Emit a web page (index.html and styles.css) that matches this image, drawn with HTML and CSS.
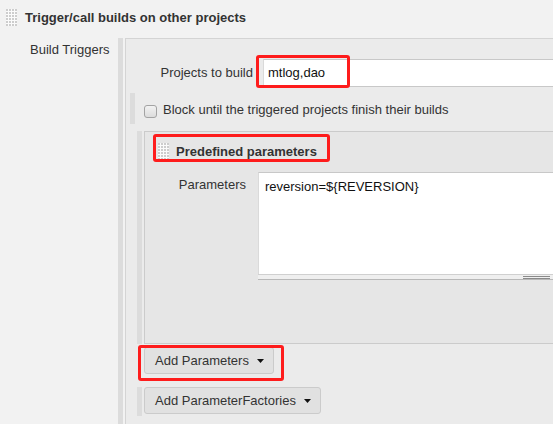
FILE: index.html
```html
<!DOCTYPE html>
<html>
<head>
<meta charset="utf-8">
<link rel="stylesheet" href="styles.css">
</head>
<body>
<div class="head">
  <svg class="grip" width="11" height="17" viewBox="0 0 11 17"><defs><pattern id="g1" width="3" height="3" patternUnits="userSpaceOnUse"><rect width="2" height="2" fill="#cdcdcd"/></pattern></defs><rect width="11" height="17" fill="#fbfbfb"/><rect width="11" height="17" fill="url(#g1)"/></svg>
  <span class="title">Trigger/call builds on other projects</span>
</div>
<div class="row">
  <div class="row-label">Build Triggers</div>
  <div class="row-body">
    <span class="bar"></span>
    <div class="content">
      <div class="field">
        <label class="field-label">Projects to build</label>
        <div class="input-wrap">
          <div class="input">mtlog,dao</div>
          <span class="mark mark-input"></span>
        </div>
      </div>
      <div class="opt">
        <span class="bar"></span>
        <span class="chk"></span>
        <span class="opt-text">Block until the triggered projects finish their builds</span>
      </div>
      <div class="block">
        <span class="bar bar-tall"></span>
        <div class="box">
          <div class="box-head">
            <svg class="grip" width="11" height="17" viewBox="0 0 11 17"><defs><pattern id="g2" width="3" height="3" patternUnits="userSpaceOnUse"><rect width="2" height="2" fill="#cdcdcd"/></pattern></defs><rect width="11" height="17" fill="#fbfbfb"/><rect width="11" height="17" fill="url(#g2)"/></svg>
            <span class="box-title">Predefined parameters</span>
            <span class="mark mark-head"></span>
          </div>
          <div class="param">
            <label class="param-label">Parameters</label>
            <div class="area-wrap">
              <div class="area">reversion=${REVERSION}</div>
              <div class="handle"><span class="grip-lines"></span></div>
            </div>
          </div>
        </div>
      </div>
      <div class="btn-row first">
        <div class="btn">Add Parameters <svg class="caret" width="7" height="4" viewBox="0 0 7 4"><polygon points="0,0 7,0 3.5,4" fill="#111"/></svg></div>
        <span class="mark mark-btn"></span>
      </div>
      <div class="btn-row second">
        <span class="bar"></span>
        <div class="btn">Add ParameterFactories <svg class="caret" width="7" height="4" viewBox="0 0 7 4"><polygon points="0,0 7,0 3.5,4" fill="#111"/></svg></div>
      </div>
    </div>
  </div>
</div>
</body>
</html>
```
FILE: styles.css
```css
html, body {
  margin: 0;
  padding: 0;
}
body {
  background: #f2f2f2;
  font-family: "Liberation Sans", Arial, sans-serif;
  font-size: 13px;
  line-height: 16px;
  color: #333;
  width: 553px;
  height: 424px;
  overflow: hidden;
}
.head {
  height: 38px;
  box-sizing: border-box;
  display: flex;
  align-items: flex-start;
  padding: 9px 0 0 6px;
}
.grip {
  display: block;
  flex: none;
}
.title {
  font-weight: bold;
  margin-left: 8px;
  margin-top: 1px;
}
.row {
  display: flex;
}
.row-label {
  width: 118px;
  flex: none;
  box-sizing: border-box;
  padding: 4px 0 0 30px;
}
.row-body {
  flex: 1;
  min-width: 0;
  display: flex;
}
.bar {
  display: block;
  width: 5px;
  flex: none;
  background: #dcdcdc;
}
.row-body > .bar {
  margin-right: 2px;
}
.content {
  flex: 1;
  min-width: 0;
  background: #ebebeb;
  border-left: 1px solid #d4d4d4;
  border-top: 1px solid #d4d4d4;
  height: 400px;
  overflow: hidden;
}
.field {
  display: flex;
  padding-top: 20px;
  align-items: center;
}
.field-label {
  width: 127px;
  text-align: right;
  margin-right: 10px;
  flex: none;
}
.input-wrap {
  position: relative;
  flex: 1;
}
.input {
  height: 28px;
  box-sizing: border-box;
  background: #fff;
  border-top: 1px solid #c8c8c8;
  border-bottom: 1px solid #c8c8c8;
  border-left: 1px solid #dadada;
  padding: 5px 0 0 4px;
  color: #111;
}
.mark {
  position: absolute;
  border: 3px solid #fe1c1c;
  border-radius: 3px;
  box-sizing: border-box;
}
.mark-input {
  left: -7px;
  top: -4px;
  width: 94px;
  height: 33px;
}
.opt {
  display: flex;
  align-items: flex-start;
  height: 31px;
  margin-top: 6px;
}
.opt > .bar {
  height: 31px;
  margin-left: 4px;
}
.chk {
  width: 13px;
  height: 13px;
  box-sizing: border-box;
  border: 1px solid #a3a3a3;
  border-radius: 3px;
  background: linear-gradient(#f2f2f2, #dcdcdc);
  margin: 12px 0 0 9px;
  flex: none;
}
.opt-text {
  margin: 9px 0 0 6px;
}
.block {
  display: flex;
  margin-top: 7px;
}
.block > .bar {
  margin-left: 11px;
  margin-right: 2px;
}
.box {
  flex: 1;
  background: #e6e6e6;
  border: 1px solid #cbcbcb;
  border-right: none;
  height: 213px;
  box-sizing: border-box;
}
.box-head {
  position: relative;
  display: flex;
  align-items: flex-start;
  padding: 11px 0 0 13px;
}
.box-title {
  font-weight: bold;
  margin: 1px 0 0 7px;
}
.mark-head {
  left: 8px;
  top: 2px;
  width: 177px;
  height: 28px;
}
.param {
  display: flex;
  margin-top: 12px;
}
.param-label {
  width: 101px;
  text-align: right;
  margin: 5px 12px 0 0;
  flex: none;
}
.area-wrap {
  flex: 1;
}
.area {
  height: 102px;
  box-sizing: border-box;
  background: #fff;
  border-top: 1px solid #c8c8c8;
  border-left: 1px solid #dadada;
  padding: 6px 0 0 6px;
  color: #111;
}
.handle {
  height: 6px;
  box-sizing: border-box;
  background: #efefef;
  border-top: 1px solid #d0d0d0;
  border-bottom: 1px solid #b8b8b8;
  position: relative;
}
.grip-lines {
  position: absolute;
  left: 265px;
  top: 1px;
  width: 27px;
  height: 3px;
  border-top: 1px solid #8a8a8a;
  border-bottom: 1px solid #8a8a8a;
  box-sizing: border-box;
}
.btn-row {
  display: flex;
  position: relative;
}
.btn-row.first {
  margin-top: 3px;
  padding-left: 18px;
}
.btn-row.second {
  margin-top: 13px;
}
.btn-row.second > .bar {
  margin-left: 11px;
  margin-right: 2px;
  height: 29px;
}
.btn {
  display: flex;
  align-items: center;
  height: 27px;
  box-sizing: border-box;
  background: #e1e1e1;
  border: 1px solid #cbcbcb;
  border-radius: 3px;
  padding: 0 9px 0 10px;
  color: #333;
  gap: 8px;
}
.caret {
  display: block;
  margin-top: 1px;
}
.mark-btn {
  left: 12px;
  top: -2px;
  width: 146px;
  height: 36px;
}
```
